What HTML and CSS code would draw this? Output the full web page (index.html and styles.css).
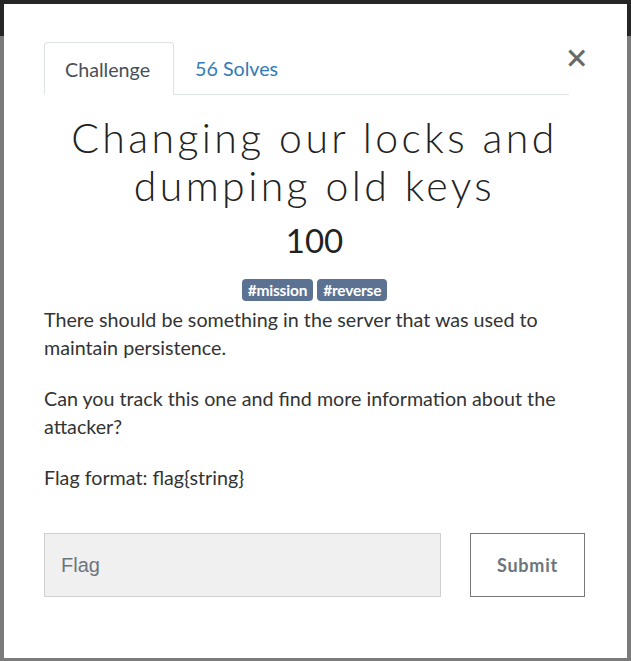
FILE: index.html
```html
<!DOCTYPE html>
<html>
<head>
<meta charset="utf-8">
<link rel="stylesheet" href="styles.css">
</head>
<body>
<div class="backdrop">
  <div class="modal">
    <div class="head">
      <ul class="tabs">
        <li class="tab active">Challenge</li>
        <li class="tab link">56 Solves</li>
      </ul>
      <span class="close">&times;</span>
    </div>
    <h1 class="title">Changing our locks and dumping old keys</h1>
    <div class="value">100</div>
    <div class="tags">
      <span class="tag">#mission</span>
      <span class="tag">#reverse</span>
    </div>
    <div class="desc">
      <p>There should be something in the server that was used to maintain persistence.</p>
      <p>Can you track this one and find more information about the attacker?</p>
      <p>Flag format: flag{string}</p>
    </div>
    <div class="form">
      <div class="input">Flag</div>
      <div class="btn">Submit</div>
    </div>
  </div>
</div>
</body>
</html>
```
FILE: styles.css
```css
html, body { margin: 0; padding: 0; }
body { font-family: "Lato", "Liberation Sans", sans-serif; }
.backdrop {
  width: 631px; height: 661px; box-sizing: border-box;
  padding: 4px 4px 0 4px;
  background: linear-gradient(#262626 0, #262626 36px, #7b7b7b 36px);
}
.modal {
  width: 623px; height: 654px; box-sizing: border-box;
  background: #fff;
  padding: 38px 42px 0 40px;
  color: #333;
}
.head { display: flex; align-items: flex-start; }
.tabs {
  list-style: none; margin: 0; padding: 0;
  display: flex; width: 525px; flex: none;
  border-bottom: 1px solid #dee2e6;
  height: 52px;
}
.tab {
  font-size: 19.7px; padding: 0 21px; line-height: 54px; height: 53px; box-sizing: border-box;
}
.tab.active {
  color: #495057; border: 1px solid #dee2e6; border-bottom-color: #fff;
  border-radius: 4px 4px 0 0; background: #fff; width: 130px; padding-left: 20px;
}
.tab.link { color: #337ab7; }
.close {
  font-size: 28px; color: #666; line-height: 1; margin-top: 2px;
  font-family: "DejaVu Sans", sans-serif; font-weight: 400; width: 18px; text-align: center;
  margin-left: -4px; -webkit-text-stroke: 0.6px #666;
}
.title {
  font-family: "Lato", sans-serif; font-weight: 300; font-size: 41px; letter-spacing: 3.4px;
  text-align: center; margin: 19px -20px 0; line-height: 48px; color: #222;
}
.value { text-align: center; font-size: 33px; line-height: 40px; margin-top: 10px; color: #222; font-weight: 400; }
.tags { display: flex; justify-content: center; gap: 4px; margin-top: 19px; }
.tag {
  background: #5b7292; color: #fff; font-weight: 700; font-size: 15.5px;
  padding: 0 6px; border-radius: 4px; line-height: 22px; height: 22px;
  letter-spacing: -0.2px;
}
.desc { font-size: 19.7px; line-height: 28px; margin-top: 5px; }
.desc p { margin: 0 0 23px; }
.form { display: flex; justify-content: space-between; margin-top: 41px; }
.input {
  width: 397px; height: 64px; box-sizing: border-box;
  background: #f0f0f0; border: 1px solid #d0d0d0;
  font-family: "Liberation Sans", Arial, sans-serif; font-size: 20px; color: #6c757d;
  padding-left: 16px; line-height: 62px;
}
.btn {
  width: 115px; height: 64px; box-sizing: border-box;
  border: 1px solid #777; color: #6c757d; font-weight: 700; font-size: 18px;
  letter-spacing: 0.8px; display: flex; align-items: center; justify-content: center;
}
```
